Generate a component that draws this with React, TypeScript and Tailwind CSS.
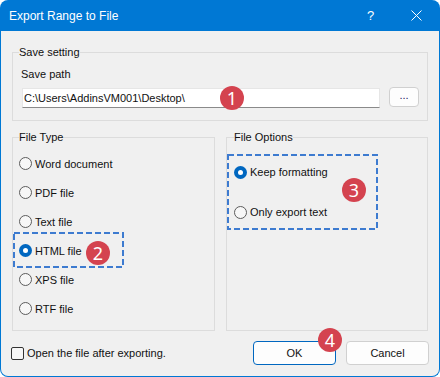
import React from "react";

const font = { fontFamily: '"Liberation Sans", Arial, sans-serif' };

function Radio({ checked }: { checked?: boolean }) {
  return checked ? (
    <span className="w-[13px] h-[13px] rounded-full bg-[#0067c0] flex items-center justify-center shrink-0">
      <span className="w-[5px] h-[5px] rounded-full bg-white" />
    </span>
  ) : (
    <span className="w-[13px] h-[13px] rounded-full border border-[#5c5c5c] bg-[#f7f7f7] shrink-0" />
  );
}

function Badge({ n, className }: { n: string; className: string }) {
  return (
    <span
      className={
        "absolute w-[24px] h-[24px] rounded-full bg-[#d4434f] text-white text-[18px] leading-none flex items-center justify-center " +
        className
      }
      style={{ fontFamily: '"Noto Sans", sans-serif' }}
    >
      {n}
    </span>
  );
}

function Dashed({ className }: { className: string }) {
  return (
    <svg className={"absolute pointer-events-none " + className} preserveAspectRatio="none">
      <rect x="1" y="1" width="calc(100% - 2px)" height="calc(100% - 2px)" fill="none" stroke="#3d7bd0" strokeWidth="2" strokeDasharray="6 3" />
    </svg>
  );
}

function RadioRow({ label, checked, h = "h-[29px]" }: { label: string; checked?: boolean; h?: string }) {
  return (
    <div className={"flex items-center gap-[3px] " + h}>
      <Radio checked={checked} />
      <span>{label}</span>
    </div>
  );
}

export default function App() {
  return (
    <div className="w-[440px] h-[377px] bg-white text-[11px] leading-[16px] text-[#111]" style={font}>
      <div className="w-full h-full flex flex-col">
        <div className="h-[31px] shrink-0 bg-[#0078d4] rounded-t-[8px] flex items-center pl-[9px] text-white text-[12px]">
          <span className="flex-1">Export Range to File</span>
          <span className="w-[10px] mr-[34px] text-[13px]">?</span>
          <svg width="11" height="11" viewBox="0 0 11 11" className="mr-[18px]">
            <path d="M0.5 0.5 L10.5 10.5 M10.5 0.5 L0.5 10.5" stroke="white" strokeWidth="1" />
          </svg>
        </div>
        <div className="flex-1 bg-[#f0f0f0] border border-t-0 border-[#0078d4] rounded-b-[8px] px-[11px] pt-[13px] flex flex-col">
          <fieldset className="border border-[#dcdcdc] pl-[6px] pr-[8px] pb-[12px]">
            <legend className="px-0">Save setting</legend>
            <div className="pl-[2px] mt-[6px]">Save path</div>
            <div className="flex items-start mt-[6px] pl-[3px]">
              <div className="relative w-[358px] h-[20px] bg-white border border-[#e6e6e6] border-b-[#8a8a8a] flex items-center pl-[1px]">
                <span>C:\Users\AddinsVM001\Desktop\</span>
                <Badge n="1" className="left-[197px] top-[-3px]" />
              </div>
              <div className="ml-[9px] mt-[-1px] w-[30px] h-[20px] bg-[#fdfdfd] border border-[#d0d0d0] rounded-[4px] flex items-center justify-center text-[#1a1a60] leading-none pb-[3px]">
                ...
              </div>
            </div>
          </fieldset>
          <div className="flex gap-[11px] mt-[8px]">
            <fieldset className="w-[203px] h-[202px] border border-[#dcdcdc] pl-[6px]">
              <legend className="px-0">File Type</legend>
              <div className="mt-[4px]">
                <RadioRow label="Word document" />
                <RadioRow label="PDF file" />
                <RadioRow label="Text file" />
                <div className="relative">
                  <RadioRow label="HTML file" checked />
                  <Dashed className="left-[-6px] top-[-4px] w-[111px] h-[36px]" />
                  <Badge n="2" className="left-[67px] top-[5px]" />
                </div>
                <RadioRow label="XPS file" />
                <RadioRow label="RTF file" />
              </div>
            </fieldset>
            <fieldset className="flex-1 h-[202px] border border-[#dcdcdc] pl-[7px]">
              <legend className="px-0">File Options</legend>
              <div className="relative mt-[15px]">
                <RadioRow label="Keep formatting" checked h="h-[24px]" />
                <div className="h-[16px]" />
                <RadioRow label="Only export text" h="h-[24px]" />
                <Dashed className="left-[-7px] top-[-6px] w-[151px] h-[76px]" />
                <Badge n="3" className="left-[108px] top-[18px]" />
              </div>
            </fieldset>
          </div>
          <div className="flex items-center mt-[10px] h-[24px]">
            <div className="flex items-center gap-[3px] ml-[-1px] flex-1">
              <span className="w-[13px] h-[13px] rounded-[2px] border border-[#333] bg-[#f7f7f7]" />
              <span>Open the file after exporting.</span>
            </div>
            <div className="flex gap-[10px] mr-[-1px]">
              <div className="relative w-[83px] h-[24px] bg-[#fdfdfd] border border-[#0067c0] rounded-[4px] flex items-center justify-center">
                OK
                <Badge n="4" className="left-[64px] top-[-14px]" />
              </div>
              <div className="w-[83px] h-[24px] bg-[#fdfdfd] border border-[#d0d0d0] rounded-[4px] flex items-center justify-center">
                Cancel
              </div>
            </div>
          </div>
        </div>
      </div>
    </div>
  );
}
